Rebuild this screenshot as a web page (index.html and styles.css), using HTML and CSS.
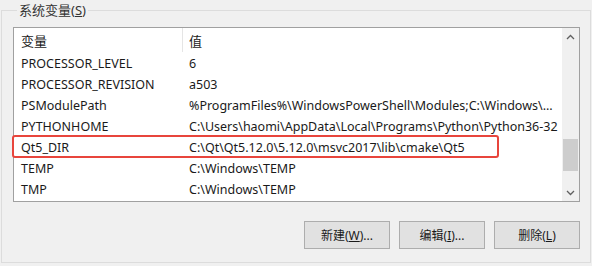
FILE: index.html
```html
<!DOCTYPE html>
<html lang="zh-CN">
<head>
  <meta charset="UTF-8">
  <title>系统变量</title>
  <link rel="stylesheet" href="styles.css">
</head>
<body>
  <fieldset class="group">
    <legend>系统变量(<u>S</u>)</legend>

    <div class="listbox">
      <div class="list">
        <div class="head">
          <div class="col name">变量</div>
          <div class="col value">值</div>
        </div>
        <div class="row"><div class="col name">PROCESSOR_LEVEL</div><div class="col value">6</div></div>
        <div class="row"><div class="col name">PROCESSOR_REVISION</div><div class="col value">a503</div></div>
        <div class="row"><div class="col name">PSModulePath</div><div class="col value">%ProgramFiles%\WindowsPowerShell\Modules;C:\Windows\...</div></div>
        <div class="row"><div class="col name">PYTHONHOME</div><div class="col value">C:\Users\haomi\AppData\Local\Programs\Python\Python36-32</div></div>
        <div class="row marked"><div class="col name">Qt5_DIR</div><div class="col value">C:\Qt\Qt5.12.0\5.12.0\msvc2017\lib\cmake\Qt5</div><span class="mark"></span></div>
        <div class="row"><div class="col name">TEMP</div><div class="col value">C:\Windows\TEMP</div></div>
        <div class="row"><div class="col name">TMP</div><div class="col value">C:\Windows\TEMP</div></div>
      </div>
      <div class="scrollbar">
        <div class="arrow">
          <svg width="9" height="6" viewBox="0 0 9 6"><path d="M1 5 L4.5 1.5 L8 5" fill="none" stroke="#606060" stroke-width="1.3"/></svg>
        </div>
        <div class="track"><div class="thumb"></div></div>
        <div class="arrow">
          <svg width="9" height="6" viewBox="0 0 9 6"><path d="M1 1 L4.5 4.5 L8 1" fill="none" stroke="#606060" stroke-width="1.3"/></svg>
        </div>
      </div>
    </div>

    <div class="buttons">
      <button>新建(<u>W</u>)...</button>
      <button>编辑(<u>I</u>)...</button>
      <button>删除(<u>L</u>)</button>
    </div>
  </fieldset>
</body>
</html>
```

FILE: styles.css
```css
body {
  margin: 0;
  width: 592px;
  height: 266px;
  background: #f0f0f0;
  font-family: "Noto Sans", "Noto Sans CJK SC", sans-serif;
  font-size: 12px;
  color: #1a1a1a;
  overflow: hidden;
}

.group {
  margin: 2px 1px 0 1px;
  padding: 0 10px 0 11px;
  height: 261px;
  border: 1px solid #dcdcdc;
  box-sizing: border-box;
}

.group legend {
  margin-left: 4px;
  padding: 0 2px;
  line-height: 16px;
  font-size: 13px;
  color: #333;
}

.listbox {
  display: flex;
  margin-top: 9px;
  height: 175px;
  border: 1px solid #a0a0a0;
  background: #fff;
  box-sizing: border-box;
}

.list {
  flex: 1;
}

.head, .row {
  display: flex;
  align-items: center;
}

.head {
  height: 24px;
  padding-top: 1px;
  box-sizing: border-box;
  font-size: 13px;
}

.row {
  position: relative;
  height: 21px;
  padding-top: 2px;
  box-sizing: border-box;
  font-size: 12.5px;
}

.col {
  white-space: nowrap;
}

.name {
  width: 161px;
  padding-left: 7px;
}

.value {
  padding-left: 7px;
}

.head .value {
  border-left: 1px solid #e5e5e5;
  align-self: stretch;
  display: flex;
  align-items: center;
  margin-top: -1px;
  padding-left: 6px;
}

.mark {
  position: absolute;
  left: -2px;
  top: -1px;
  width: 487px;
  height: 23px;
  border: 2px solid #e8453c;
  border-radius: 3px;
  box-sizing: border-box;
}

.scrollbar {
  width: 17px;
  display: flex;
  flex-direction: column;
  background: #f0f0f0;
}

.arrow {
  height: 17px;
  display: flex;
  align-items: center;
  justify-content: center;
}

.track {
  flex: 1;
  padding-top: 94px;
}

.thumb {
  height: 32px;
  margin: 0 1px;
  background: #cdcdcd;
}

.buttons {
  display: flex;
  justify-content: flex-end;
  gap: 9px;
  margin-top: 19px;
}

.buttons button {
  width: 86px;
  height: 28px;
  padding: 0;
  background: #e1e1e1;
  border: 1px solid #adadad;
  font-family: "Noto Sans", "Noto Sans CJK SC", sans-serif;
  font-size: 12px;
  color: #1a1a1a;
}
```
